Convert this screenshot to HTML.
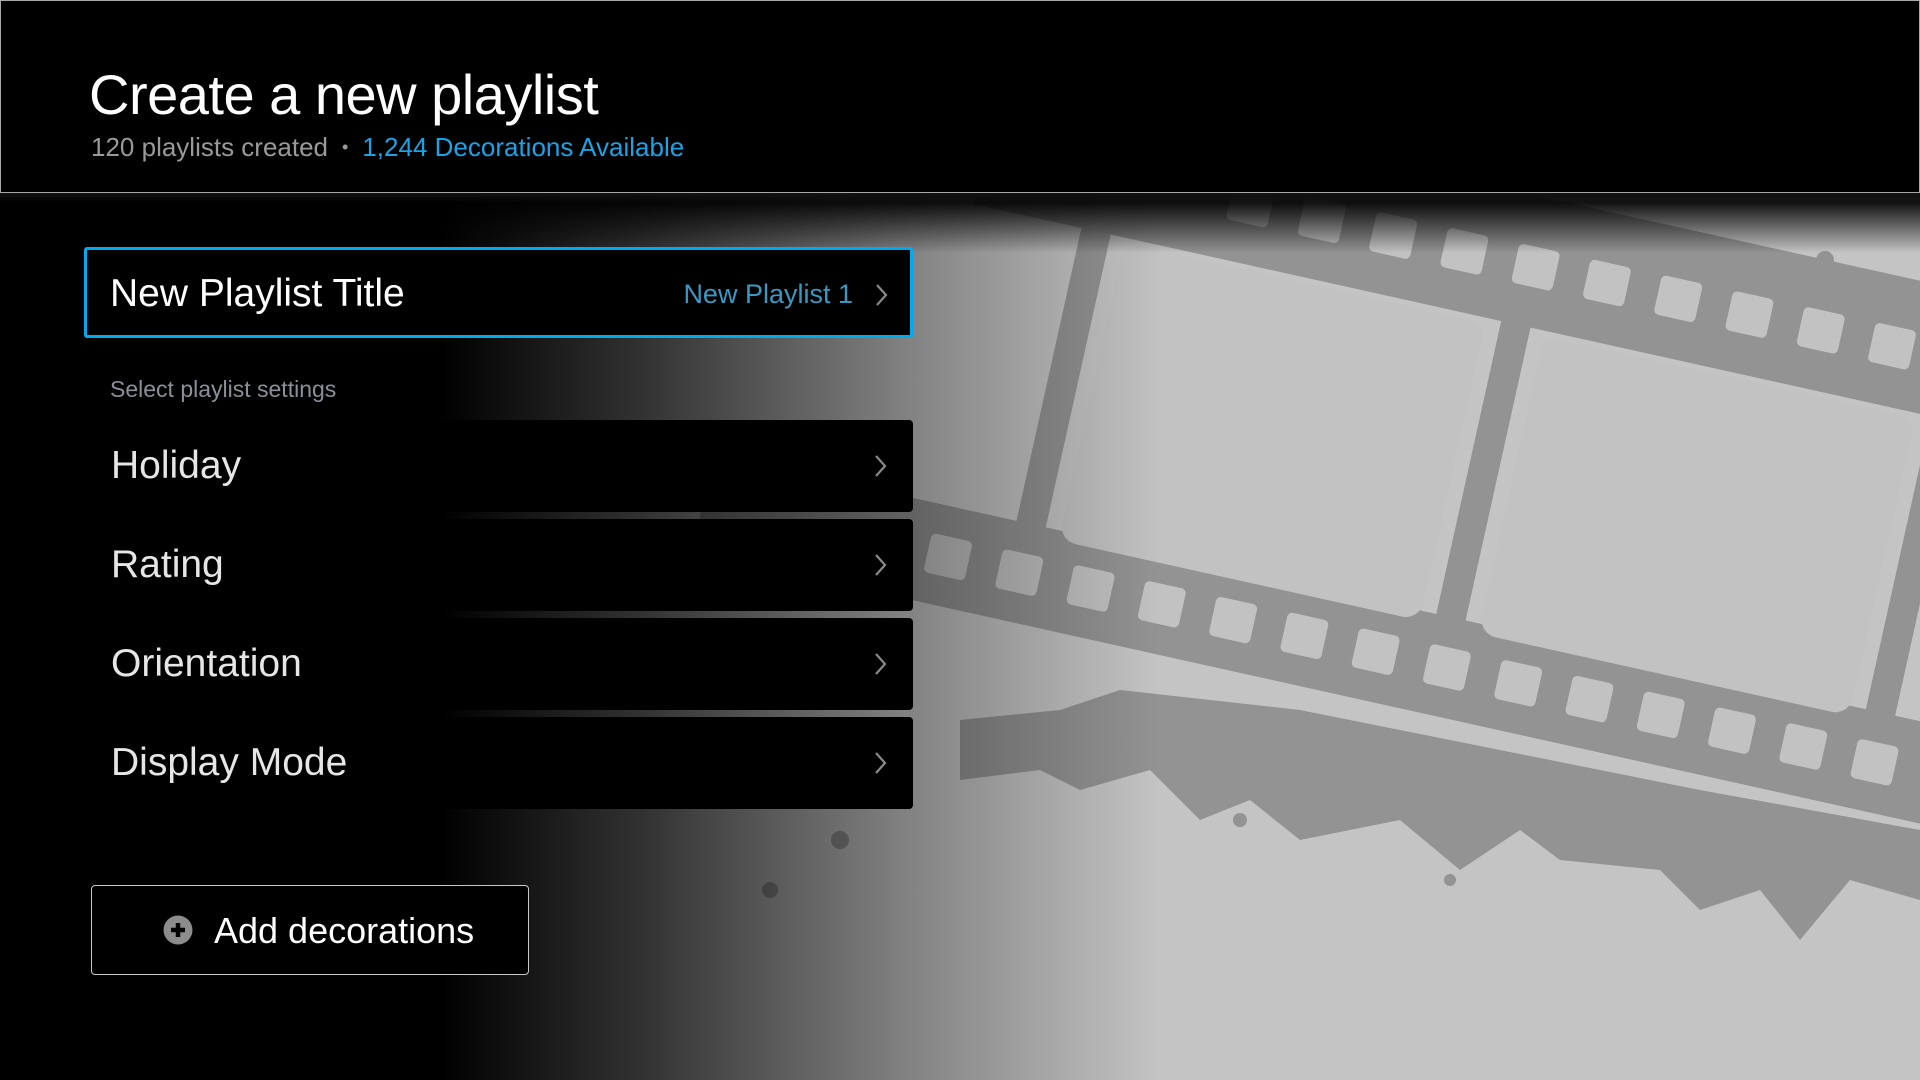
<!DOCTYPE html>
<html><head><meta charset="utf-8"><style>
*{margin:0;padding:0;box-sizing:border-box}
html,body{width:1920px;height:1080px;overflow:hidden;background:#000;font-family:"Liberation Sans",sans-serif}
#bg{position:absolute;left:0;top:0;width:1920px;height:1080px}
#shade{position:absolute;left:0;top:0;width:1920px;height:1080px;background:linear-gradient(to right,#000 0px,#000 440px,rgba(0,0,0,0.75) 640px,rgba(0,0,0,0.35) 900px,rgba(0,0,0,0) 1160px)}
#topfade{position:absolute;left:0;top:193px;width:1920px;height:60px;background:linear-gradient(to bottom,rgba(18,18,18,1) 0,rgba(0,0,0,0.9) 10px,rgba(0,0,0,0) 60px)}
#header{position:absolute;left:0;top:0;width:1920px;height:193px;background:#000;border:1px solid #a8a8a8}
h1{position:absolute;left:88px;top:61px;font-size:56px;font-weight:300;color:#fff;letter-spacing:-0.5px}
.sub{position:absolute;left:90px;top:131px;font-size:26px;color:#9a9a9a}
.sub .dot{margin:0 14px;font-size:18px;vertical-align:3px}
.sub .blue{color:#1aa3e6}
.titlebox{position:absolute;left:84px;top:247px;width:829px;height:91px;border:3px solid #00aaee;border-radius:3px;background:#000}
.titlebox .l{position:absolute;left:23px;top:22px;font-size:39px;color:#fff}
.titlebox .r{position:absolute;right:57px;top:29px;font-size:27px;color:#3b98c2}
.chev{position:absolute;width:14px;height:24px}
.label{position:absolute;left:110px;top:376px;font-size:23px;color:#8a8f98}
.row{position:absolute;left:84px;width:829px;height:92px;background:#000;border-radius:4px}
.row span{position:absolute;left:27px;top:24px;font-size:39px;color:#e6e6e6}
.btn{position:absolute;left:91px;top:885px;width:438px;height:90px;border:1.5px solid #c8c8c8;border-radius:4px;background:#000}
.btn span{position:absolute;left:122px;top:24px;font-size:36px;color:#fff}
</style></head><body>
<svg id="bg" viewBox="0 0 1920 1080">
<rect width="1920" height="1080" fill="#c4c4c4"/>
<g fill="#939393">
<g transform="rotate(12.5 918 540)">
<rect x="900" y="70" width="1300" height="130"/>
<rect x="700" y="500" width="1500" height="100"/>
<rect x="1010" y="150" width="30" height="370"/>
<rect x="1440" y="150" width="30" height="370"/>
<rect x="1880" y="150" width="30" height="370"/>
</g>
<path d="M960 720 L1060 710 L1120 690 L1300 710 L1500 750 L1700 790 L1920 830 L1920 900 L1850 880 L1800 940 L1760 890 L1700 910 L1660 870 L1560 860 L1520 830 L1460 870 L1400 820 L1300 840 L1250 800 L1200 820 L1150 770 L1080 790 L1040 770 L960 780Z"/>
<circle cx="1130" cy="745" r="9"/><circle cx="1240" cy="820" r="7"/><circle cx="1450" cy="880" r="6"/><circle cx="1825" cy="260" r="9"/><circle cx="840" cy="840" r="9"/><circle cx="770" cy="890" r="8"/>
</g>
<g fill="#c2c2c2" transform="rotate(12.5 918 540)">
<rect x="1055" y="205" width="370" height="305" rx="18"/>
<rect x="1485" y="205" width="380" height="305" rx="18"/>
<rect x="930" y="530" width="42" height="40" rx="5"/><rect x="1003" y="530" width="42" height="40" rx="5"/><rect x="1076" y="530" width="42" height="40" rx="5"/><rect x="1149" y="530" width="42" height="40" rx="5"/><rect x="1222" y="530" width="42" height="40" rx="5"/><rect x="1295" y="530" width="42" height="40" rx="5"/><rect x="1368" y="530" width="42" height="40" rx="5"/><rect x="1441" y="530" width="42" height="40" rx="5"/><rect x="1514" y="530" width="42" height="40" rx="5"/><rect x="1587" y="530" width="42" height="40" rx="5"/><rect x="1660" y="530" width="42" height="40" rx="5"/><rect x="1733" y="530" width="42" height="40" rx="5"/><rect x="1806" y="530" width="42" height="40" rx="5"/><rect x="1879" y="530" width="42" height="40" rx="5"/><rect x="1952" y="530" width="42" height="40" rx="5"/>
<rect x="1149" y="120" width="42" height="40" rx="5"/><rect x="1222" y="120" width="42" height="40" rx="5"/><rect x="1295" y="120" width="42" height="40" rx="5"/><rect x="1368" y="120" width="42" height="40" rx="5"/><rect x="1441" y="120" width="42" height="40" rx="5"/><rect x="1514" y="120" width="42" height="40" rx="5"/><rect x="1587" y="120" width="42" height="40" rx="5"/><rect x="1660" y="120" width="42" height="40" rx="5"/><rect x="1733" y="120" width="42" height="40" rx="5"/><rect x="1806" y="120" width="42" height="40" rx="5"/><rect x="1879" y="120" width="42" height="40" rx="5"/>
</g>
</svg>
<div id="shade"></div>
<div id="topfade"></div>
<div id="header">
<h1>Create a new playlist</h1>
<div class="sub">120 playlists created<span class="dot">•</span><span class="blue">1,244 Decorations Available</span></div>
</div>
<div class="titlebox"><div class="l">New Playlist Title</div><div class="r">New Playlist 1</div>
<svg class="chev" style="left:788px;top:33px" viewBox="0 0 14 24"><path d="M2 2 L11 12 L2 22" fill="none" stroke="#8a8a8a" stroke-width="2.2"/></svg></div>
<div class="label">Select playlist settings</div>
<div class="row" style="top:420px"><span>Holiday</span><svg class="chev" style="left:790px;top:34px" viewBox="0 0 14 24"><path d="M2 2 L11 12 L2 22" fill="none" stroke="#8a8a8a" stroke-width="2.2"/></svg></div>
<div class="row" style="top:519px"><span>Rating</span><svg class="chev" style="left:790px;top:34px" viewBox="0 0 14 24"><path d="M2 2 L11 12 L2 22" fill="none" stroke="#8a8a8a" stroke-width="2.2"/></svg></div>
<div class="row" style="top:618px"><span>Orientation</span><svg class="chev" style="left:790px;top:34px" viewBox="0 0 14 24"><path d="M2 2 L11 12 L2 22" fill="none" stroke="#8a8a8a" stroke-width="2.2"/></svg></div>
<div class="row" style="top:717px"><span>Display Mode</span><svg class="chev" style="left:790px;top:34px" viewBox="0 0 14 24"><path d="M2 2 L11 12 L2 22" fill="none" stroke="#8a8a8a" stroke-width="2.2"/></svg></div>
<div class="btn"><svg style="position:absolute;left:71px;top:29px" width="30" height="30" viewBox="0 0 30 30"><circle cx="15" cy="15" r="14.5" fill="#8c8c8c"/><path d="M15 8 V22 M8 15 H22" stroke="#000" stroke-width="4.5"/></svg><span>Add decorations</span></div>
</body></html>
